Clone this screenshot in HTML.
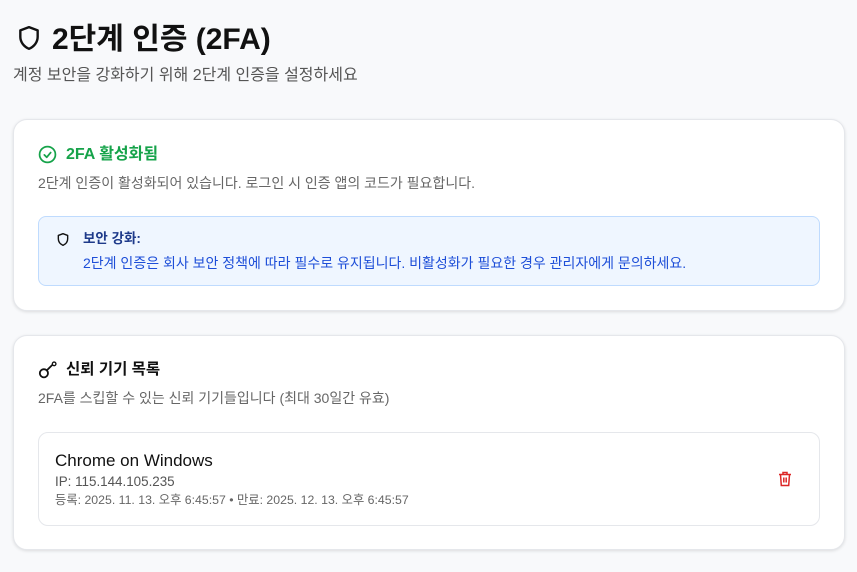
<!DOCTYPE html>
<html><head><meta charset="utf-8"><style>
*{margin:0;padding:0;box-sizing:border-box}
body{width:857px;height:572px;background:#f8f9fb;font-family:"Liberation Sans","Noto Sans CJK KR",sans-serif;position:relative;overflow:hidden;color:#111}
.abs{position:absolute;white-space:nowrap}
.card{position:absolute;left:13px;width:832px;background:#fff;border:1px solid #e5e7eb;border-radius:14px;box-shadow:0 1px 3px rgba(0,0,0,.12)}
</style></head><body>
<svg class="abs" style="left:16px;top:24px" width="26" height="28" viewBox="0 0 24 24" fill="none" stroke="#111" stroke-width="2.2" stroke-linejoin="round"><path d="M12 2l8 3v6c0 5-3.5 9-8 11-4.5-2-8-6-8-11V5z"/></svg>
<div class="abs" style="left:52px;top:21px;font-size:30px;font-weight:bold;line-height:38px">2단계 인증 (2FA)</div>
<div class="abs" style="left:13px;top:65px;font-size:16px;color:#555;line-height:21px">계정 보안을 강화하기 위해 2단계 인증을 설정하세요</div>

<div class="card" style="top:119px;height:192px"></div>
<svg class="abs" style="left:38px;top:145px" width="19" height="19" viewBox="0 0 24 24" fill="none" stroke="#16a34a" stroke-width="2.2"><circle cx="12" cy="12" r="10"/><path d="M8 12.5l3 3 5-6" stroke-linecap="round" stroke-linejoin="round"/></svg>
<div class="abs" style="left:66px;top:145px;font-size:16px;font-weight:bold;color:#16a34a;line-height:20px">2FA 활성화됨</div>
<div class="abs" style="left:38px;top:174px;font-size:14px;color:#666;line-height:18px">2단계 인증이 활성화되어 있습니다. 로그인 시 인증 앱의 코드가 필요합니다.</div>
<div class="abs" style="left:38px;top:216px;width:782px;height:70px;background:#eff6ff;border:1px solid #bfdbfe;border-radius:8px"></div>
<svg class="abs" style="left:56px;top:232px" width="14" height="15" viewBox="0 0 24 24" fill="none" stroke="#111" stroke-width="2.4" stroke-linejoin="round"><path d="M12 2l8 3v6c0 5-3.5 9-8 11-4.5-2-8-6-8-11V5z"/></svg>
<div class="abs" style="left:83px;top:230px;font-size:13.5px;font-weight:bold;color:#1e3a8a;line-height:18px">보안 강화:</div>
<div class="abs" style="left:83px;top:254px;font-size:14px;color:#1d4ed8;line-height:18px">2단계 인증은 회사 보안 정책에 따라 필수로 유지됩니다. 비활성화가 필요한 경우 관리자에게 문의하세요.</div>

<div class="card" style="top:335px;height:215px"></div>
<svg class="abs" style="left:38px;top:361px" width="20" height="18" viewBox="0 0 24 22" fill="none" stroke="#111" stroke-width="2.2" stroke-linecap="round"><circle cx="7" cy="15" r="5"/><path d="M10.5 11.5L17 5"/><circle cx="19.5" cy="3.5" r="2.2" stroke-width="1.6"/></svg>
<div class="abs" style="left:66px;top:360px;font-size:15.5px;font-weight:bold;line-height:20px">신뢰 기기 목록</div>
<div class="abs" style="left:38px;top:389px;font-size:14px;color:#666;line-height:18px">2FA를 스킵할 수 있는 신뢰 기기들입니다 (최대 30일간 유효)</div>
<div class="abs" style="left:38px;top:432px;width:782px;height:94px;border:1px solid #e5e7eb;border-radius:10px"></div>
<div class="abs" style="left:55px;top:451px;font-size:17px;line-height:20px">Chrome on Windows</div>
<div class="abs" style="left:55px;top:473px;font-size:13.4px;color:#555;line-height:18px">IP: 115.144.105.235</div>
<div class="abs" style="left:55px;top:492px;font-size:12.3px;color:#666;line-height:16px">등록: 2025. 11. 13. 오후 6:45:57 • 만료: 2025. 12. 13. 오후 6:45:57</div>
<svg class="abs" style="left:778px;top:471px" width="14" height="16" viewBox="0 0 14 16" fill="none" stroke="#dc2626" stroke-width="1.5"><path d="M1 3.5h12M5 3.5V1.5h4v2M2.5 3.5l.8 11h7.4l.8-11M5.8 6.5v5M8.2 6.5v5"/></svg>
</body></html>
